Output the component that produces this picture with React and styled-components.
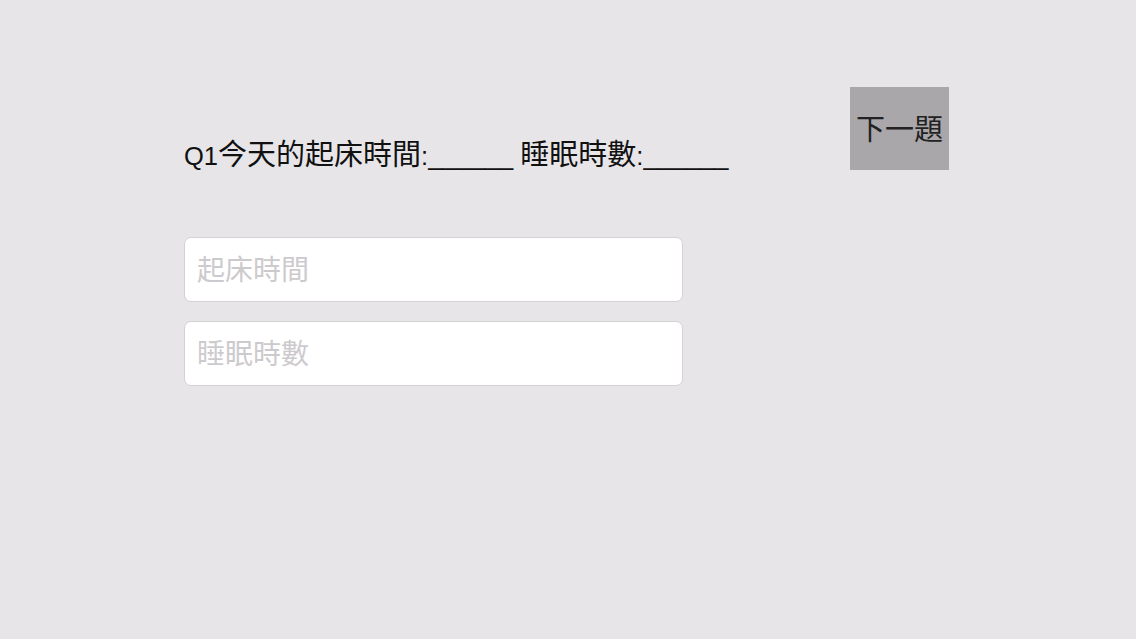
import React from 'react'
import styled, { createGlobalStyle } from 'styled-components'

const GlobalStyle = createGlobalStyle`
  html, body {
    margin: 0;
    padding: 0;
    background: #e7e5e8;
    font-family: "Liberation Sans", "Noto Sans CJK TC", sans-serif;
  }
`;

const Page = styled.div`
  min-height: 639px;
  padding: 87px 0 0 184px;
  box-sizing: border-box;
`;

const Header = styled.div`
  width: 765px;
  display: flex;
  justify-content: space-between;
  align-items: flex-end;
`;

const Question = styled.div`
  font-size: 25.5px;
  line-height: 32px;
  color: #111;
  margin-bottom: -2px;
  white-space: pre;
`;

const Han = styled.span`
  font-family: "Noto Sans CJK TC", sans-serif;
  font-size: 29px;
`;

const NextButton = styled.button`
  width: 99px;
  height: 83px;
  padding: 0 0 4px;
  border: none;
  background: #a9a7aa;
  color: #222;
  font-family: "Noto Sans CJK TC", sans-serif;
  font-size: 29px;
  cursor: pointer;
`;

const Fields = styled.div`
  margin-top: 67px;
  display: flex;
  flex-direction: column;
  gap: 19px;
`;

const Field = styled.input`
  width: 499px;
  height: 65px;
  box-sizing: border-box;
  padding: 0 12px 3px;
  border: 1px solid #d3d1d4;
  border-radius: 7px;
  background: #fff;
  font-family: "Noto Sans CJK TC", sans-serif;
  font-size: 28px;
  color: #222;
  outline: none;

  &::placeholder {
    color: #cdcacd;
  }
`;

export default function App() {
  return (
    <>
      <GlobalStyle />
      <Page>
        <Header>
          <Question>
            Q1<Han>今天的起床時間</Han>:______ <Han>睡眠時數</Han>:______
          </Question>
          <NextButton>下一題</NextButton>
        </Header>
        <Fields>
          <Field placeholder="起床時間" />
          <Field placeholder="睡眠時數" />
        </Fields>
      </Page>
    </>
  )
}
